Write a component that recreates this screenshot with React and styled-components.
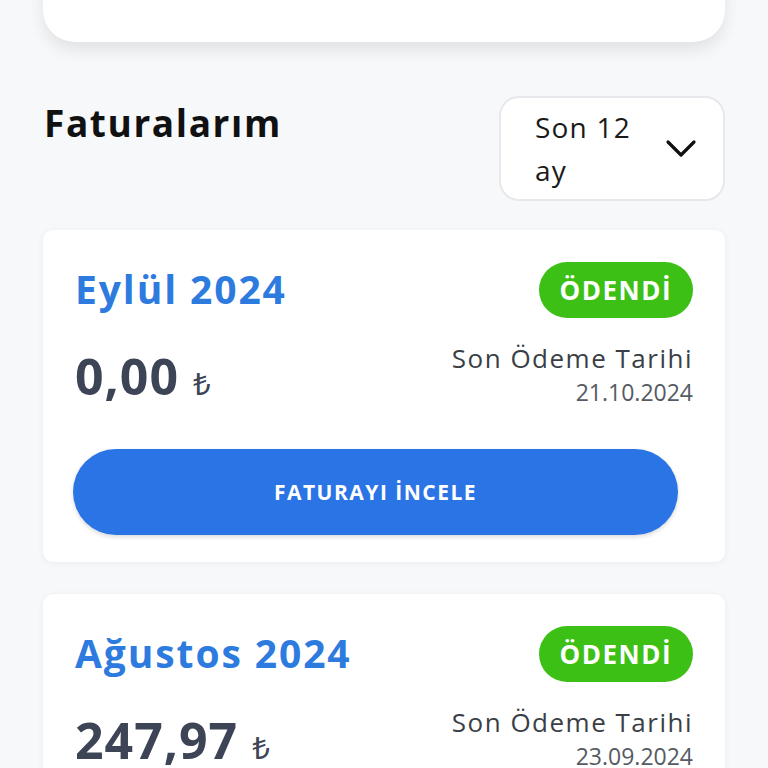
import React from 'react';
import styled, { createGlobalStyle } from 'styled-components';

const GlobalStyle = createGlobalStyle`
  html, body {
    margin: 0;
    padding: 0;
    background: #f7f8fa;
    font-family: "Open Sans", "Noto Sans", sans-serif;
    overflow: hidden;
  }
  * { box-sizing: border-box; }
`;

const invoices = [
  { month: 'Eylül 2024', amount: '0,00', due: '21.10.2024', status: 'ÖDENDİ' },
  { month: 'Ağustos 2024', amount: '247,97', due: '23.09.2024', status: 'ÖDENDİ' },
];

const ChevronDown = () => (
  <svg width="32" height="20" viewBox="0 0 32 20" fill="none">
    <path d="M3 3 L16 16 L29 3" stroke="#111" strokeWidth="3.2" strokeLinecap="round" strokeLinejoin="round" />
  </svg>
);

const App = () => {
  return (
    <>
      <GlobalStyle />
      <Page>
        <TopCard />
        <Header>
          <Title>Faturalarım</Title>
          <Select>
            <SelectText>Son 12 ay</SelectText>
            <ChevronDown />
          </Select>
        </Header>
        <List>
          {invoices.map((inv, i) => (
            <Card key={i}>
              <Row>
                <Month>{inv.month}</Month>
                <Badge>{inv.status}</Badge>
              </Row>
              <Row>
                <Amount>
                  {inv.amount}<Currency>₺</Currency>
                </Amount>
                <Due>
                  <DueLabel>Son Ödeme Tarihi</DueLabel>
                  <DueDate>{inv.due}</DueDate>
                </Due>
              </Row>
              <Button>FATURAYI İNCELE</Button>
            </Card>
          ))}
        </List>
      </Page>
    </>
  );
};

export default App;

const Page = styled.div`
  padding: 0 43px;
  display: flex;
  flex-direction: column;
`;

const TopCard = styled.div`
  margin-top: -60px;
  height: 102px;
  background: #fff;
  border-radius: 32px;
  box-shadow: 0 8px 16px rgba(0, 0, 0, 0.09);
`;

const Header = styled.div`
  display: flex;
  justify-content: space-between;
  align-items: flex-start;
  margin-top: 54px;
`;

const Title = styled.h2`
  margin: 3px 0 0 1px;
  font-size: 37px;
  font-weight: 700;
  letter-spacing: 1.6px;
  color: #111;
  line-height: 48px;
`;

const Select = styled.div`
  width: 226px;
  height: 105px;
  border: 2px solid #e6e8eb;
  border-radius: 20px;
  background: #fff;
  display: flex;
  align-items: center;
  justify-content: space-between;
  padding: 0 26px 0 34px;
`;

const SelectText = styled.div`
  width: 112px;
  font-size: 28px;
  letter-spacing: 1.2px;
  line-height: 43px;
  color: #1a1a1a;
`;

const List = styled.div`
  display: flex;
  flex-direction: column;
  gap: 32px;
  margin-top: 29px;
`;

const Card = styled.div`
  background: #fff;
  border-radius: 10px;
  box-shadow: 0 1px 6px rgba(0, 0, 0, 0.06);
  padding: 32px 32px 27px 32px;
  display: flex;
  flex-direction: column;
`;

const Row = styled.div`
  display: flex;
  justify-content: space-between;
  align-items: center;
  margin-bottom: 24px;
`;

const Month = styled.div`
  margin-top: -4px;
  font-size: 39px;
  font-weight: 700;
  letter-spacing: 1.9px;
  color: #2e7be0;
`;

const Badge = styled.div`
  height: 56px;
  padding: 0 21px;
  border-radius: 28px;
  background: #3cc015;
  color: #fff;
  font-weight: 700;
  font-size: 26px;
  letter-spacing: 1.5px;
  display: flex;
  align-items: center;
`;

const Amount = styled.div`
  font-size: 50px;
  font-weight: 700;
  letter-spacing: 1px;
  color: #3c4456;
  display: flex;
  align-items: baseline;
`;

const Currency = styled.span`
  font-size: 31px;
  font-weight: 400;
  letter-spacing: 0;
  margin-left: 14px;
`;

const Due = styled.div`
  display: flex;
  flex-direction: column;
  align-items: flex-end;
`;

const DueLabel = styled.div`
  font-size: 26px;
  letter-spacing: 1.5px;
  color: #3a3f47;
  line-height: 34px;
  margin-top: -2px;
`;

const DueDate = styled.div`
  font-size: 23px;
  color: #555b63;
  line-height: 34px;
`;

const Button = styled.button`
  margin: 15px 15px 0 -2px;
  height: 86px;
  border: none;
  border-radius: 43px;
  background: #2a74e6;
  color: #fff;
  font-family: inherit;
  font-size: 21px;
  font-weight: 700;
  letter-spacing: 1.5px;
  box-shadow: 0 2px 4px rgba(0, 0, 0, 0.15);
`;
